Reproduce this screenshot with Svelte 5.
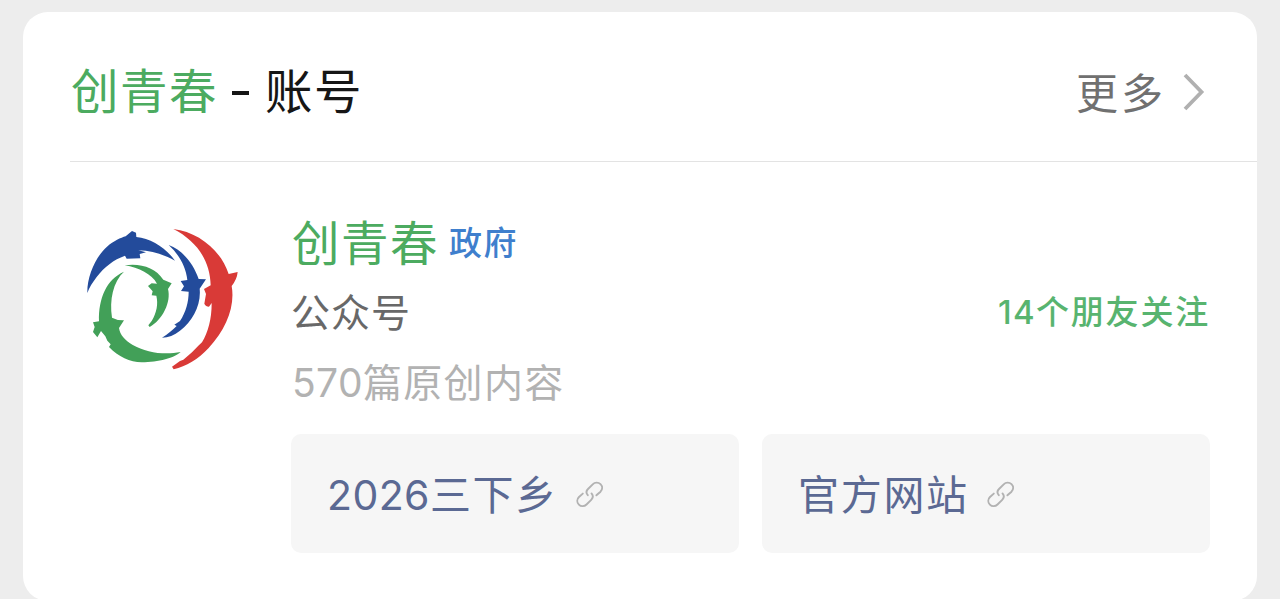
<script lang="ts">
  const links = ['2026三下乡', '官方网站'];
  const split = (s: string) => s.match(/[0-9]+|[^0-9]+/g) ?? [];
  const isNum = (s: string) => /^[0-9]/.test(s);
</script>

<main class="card">
  <header class="head">
    <h1 class="title"><span class="hit">创青春</span><span class="dash"></span><span>账号</span></h1>
    <div class="more">
      <span>更多</span>
      <svg class="chevron" width="22" height="40" viewBox="0 0 22 40"><path d="M2 3 L18.5 20 L2 37" fill="none" stroke="#b0b0b0" stroke-width="3.8" /></svg>
    </div>
  </header>

  <section class="account">
    <svg class="logo" width="175" height="165" viewBox="0 0 525 495">
      <g fill="#234b9b">
        <path d="M37 234 C36 184 62 125 96 95 C116 78 138 68 152 64 L171 48 L183 53 L184 66 C228 70 272 98 300 137 C270 121 235 107 190 106 L213 112 L194 117 L196 130 L155 131 L150 122 C116 134 88 156 65 186 C52 203 43 218 37 234Z" />
        <path d="M281 90 C326 107 356 149 371 192 L393 193 L374 221 C379 269 353 319 315 347 C298 360 280 368 261 368 C278 358 293 345 305 333 L298 329 L315 318 C333 291 341 260 341 230 L318 228 L327 214 L317 198 L337 195 C332 153 313 120 281 90Z" />
      </g>
      <g fill="#42a058">
        <path d="M149 151 C197 144 241 158 265 194 L290 205 L279 222 C289 261 263 314 224 336 L220 331 L230 318 C245 293 250 267 244 242 L230 241 L233 229 L219 213 L230 205 L246 206 C230 177 192 158 149 151Z" />
        <path d="M147 170 C114 200 103 255 111 308 Q128 317 147 316 L132 339 C135 360 150 376 172 389 C215 414 270 420 317 411 C300 428 250 442 200 442 C165 441 130 425 102 396 L107 388 L97 377 L91 364 L78 348 L67 367 L54 351 L59 336 L54 322 L72 319 C70 251 94 193 147 170Z" />
      </g>
      <path fill="#d93a37" d="M295 42 C370 51 438 106 461 177 L488 171 Q486 193 470 213 C481 275 453 343 401 399 C369 433 334 454 296 463 L291 455 L315 438 L325 434 L351 412 L370 392 L381 382 C399 352 410 313 410 264 L402 275 Q392 275 388 266 L393 237 L387 222 L407 211 C405 133 362 76 295 42Z" />
    </svg>

    <div class="info">
      <div class="name"><span class="hit">创青春</span><span class="tag">政府</span></div>
      <div class="meta">
        <span class="kind">公众号</span>
        <span class="friends"><span class="num">14</span>个朋友关注</span>
      </div>
      <div class="count"><span class="num">570</span>篇原创内容</div>
      <div class="links">
        {#each links as label}
          <div class="link">
            <span class="label">{#each split(label) as part}<span class:num={isNum(part)}>{part}</span>{/each}</span>
            <svg class="chain" width="28" height="28" viewBox="0 0 28 28" fill="none" stroke="#b2b2b2" stroke-width="1.9" stroke-linecap="round">
              <path d="M11.8 14.2 C9.7 11.8 10.2 9.8 12 8 L16.7 3.3 C18.8 1.2 22.3 1 24.5 3.2 C26.7 5.4 26.6 8.5 24.5 10.7 L20.4 14.3" />
              <path d="M15.5 12.4 C17.5 14.7 17 17 15.2 18.8 L10.5 23.5 C8.4 25.6 5 25.8 2.9 23.6 C.7 21.4 .8 18.2 3 16 L6.8 12.6" />
            </svg>
          </div>
        {/each}
      </div>
    </div>
  </section>
</main>

<style>
  :global(body) { margin: 0; background: #ededed; overflow: hidden; }
  .card {
    box-sizing: border-box;
    width: 1234px;
    height: 589px;
    margin: 12px 0 0 23px;
    border-radius: 25px;
    background: #fff;
    font-family: "Noto Sans CJK SC", sans-serif;
  }
  .num { font-family: Inter, sans-serif; line-height: 0; letter-spacing: 0.4px; }
  .head {
    box-sizing: border-box;
    height: 150px;
    margin-left: 47px;
    padding: 5px 52px 0 0;
    border-bottom: 1px solid #e3e3e3;
    display: flex;
    align-items: center;
    justify-content: space-between;
  }
  .title {
    margin: 0;
    display: flex;
    align-items: center;
    font-size: 47.5px;
    font-weight: 400;
    line-height: 60px;
    letter-spacing: 1.5px;
    color: #161616;
    padding: 0 0 0 1px;
  }
  .hit { color: #4cab60; }
  .dash { width: 17px; height: 4px; margin: 8px 16px 0 14px; background: #161616; }
  .more {
    display: flex;
    align-items: center;
    gap: 17px;
    font-size: 42px;
    line-height: 60px;
    letter-spacing: 3px;
    color: #707070;
    padding-top: 4px;
  }
  .chevron { display: block; margin-top: 1px; }
  .account { display: flex; padding: 41px 47px 0 52px; }
  .logo { flex: none; margin-top: 12px; }
  .info { flex: 1; margin-left: 41px; }
  .name {
    display: flex;
    align-items: center;
    height: 75px;
    font-size: 47.5px;
    letter-spacing: 1.5px;
    line-height: 60px;
    padding-left: 1px;
  }
  .tag { margin-left: 10px; font-size: 33px; letter-spacing: 1.5px; color: #3f7fcd; font-weight: 500; }
  .meta { display: flex; align-items: center; justify-content: space-between; height: 64px; line-height: 60px; }
  .kind { font-size: 39px; letter-spacing: 1px; color: #686868; }
  .friends { font-size: 33px; letter-spacing: 1.8px; color: #58b46f; font-weight: 500; }
  .friends .num { letter-spacing: 1.3px; }
  .count { height: 76px; line-height: 76px; padding-left: 1px; font-size: 39px; letter-spacing: 1.3px; color: #b2b2b2; }
  .links { display: grid; grid-template-columns: 448px 448px; gap: 23px; margin-top: 16px; }
  .link {
    box-sizing: border-box;
    height: 119px;
    padding-left: 36px;
    border-radius: 10px;
    background: #f6f6f6;
    display: flex;
    align-items: center;
    gap: 18px;
  }
  .label { font-size: 41px; letter-spacing: 1.7px; line-height: 60px; margin-top: -3px; color: #5b6993; }
  .chain { margin-top: 2px; }
</style>
